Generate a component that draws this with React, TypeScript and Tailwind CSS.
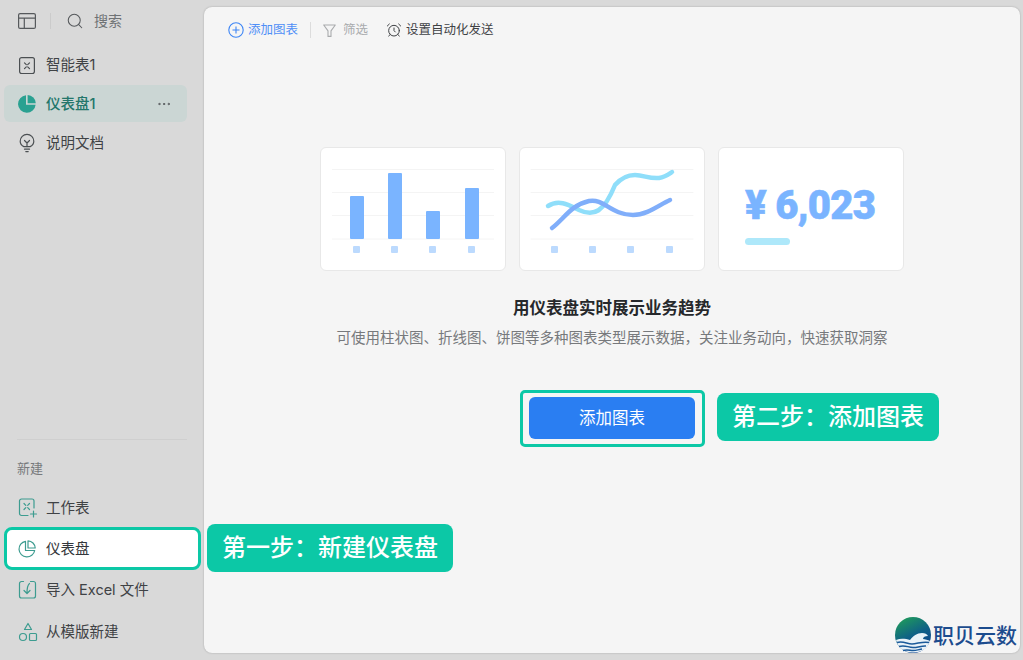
import { FC, ReactNode } from "react";
import { AlarmClock, Ellipsis, Search } from "lucide-react";

const cjk = "font-['Inter','Noto_Sans_CJK_SC',sans-serif]";

const SheetIcon = () => (
    <svg width="18" height="18" viewBox="0 0 18 18" fill="none" stroke="#4b4f52" strokeWidth="1.2">
        <rect x="1.6" y="1.6" width="14.8" height="16" rx="2" />
        <path d="M6.5 6.8l1.8 1.8M11.5 6.8l-1.8 1.8M6.5 12.6l1.8-1.8M11.5 12.6l-1.8-1.8" strokeLinecap="round" />
    </svg>
);

const PieFilled = () => (
    <svg width="18" height="18" viewBox="0 0 18 18" fill="#2aa191">
        <path d="M8 .2v9.5h9.6A8.8 8.8 0 1 1 8 .2z" />
        <path d="M9.6 0a8.4 8.4 0 0 1 8.2 8.2H9.6z" />
    </svg>
);

const BulbIcon = () => (
    <svg width="18" height="20" viewBox="0 0 18 20" fill="none" stroke="#4b4f52" strokeWidth="1.2" strokeLinecap="round" strokeLinejoin="round">
        <path d="M5.8 13.6C3.6 12.4 2.2 10.500 2.200 8.200a6.800 6.800 0 0 1 13.600 0c0 2.300-1.400 4.200-3.600 5.400z" />
        <path d="M6.500 7.500L9 10l2.500-2.500M9 10v3.600M6.500 16.200h5M7.800 18.600h2.400" />
    </svg>
);

const SheetPlusIcon = () => (
    <svg width="20" height="20" viewBox="0 0 20 20" fill="none" stroke="#3d9c90" strokeWidth="1.2" strokeLinecap="round">
        <path d="M10 17.500H3.500a2 2 0 0 1-2-2V3a2 2 0 0 1 2-2h10.500a2 2 0 0 1 2 2v7" />
        <path d="M6 5.500l1.800 1.800M11.500 5.500L9.700 7.300M6 11.500l1.800-1.800M11.500 11.500L9.700 9.700M15.500 13v6M12.500 16h6" />
    </svg>
);

const PieOutline = () => (
    <svg width="18" height="18" viewBox="0 0 18 18" fill="none" stroke="#3d9c90" strokeWidth="1.200">
        <path d="M7.500 1.300a7.900 7.900 0 1 0 9.200 9.200H7.500z" strokeLinejoin="round" />
        <path d="M10 .8a7.500 7.500 0 0 1 7.200 7.200H10z" strokeLinejoin="round" />
    </svg>
);

const ImportIcon = () => (
    <svg width="20" height="20" viewBox="0 0 20 20" fill="none" stroke="#3d9c90" strokeWidth="1.200" strokeLinecap="round" strokeLinejoin="round">
        <path d="M5.500 1.500h-2a2 2 0 0 0-2 2v12.500a2 2 0 0 0 2 2h12a2 2 0 0 0 2-2V3.500a2 2 0 0 0-2-2h-3" />
        <path d="M11.500 3.500C9.500 5 9 7.500 9 13.500M6 10.500l3 3 3-3" />
    </svg>
);

const TemplateIcon = () => (
    <svg width="20" height="20" viewBox="0 0 20 20" fill="none" stroke="#3d9c90" strokeWidth="1.200" strokeLinejoin="round">
        <path d="M10 1.500l3.500 6h-7z" />
        <circle cx="5" cy="15" r="3.500" />
        <rect x="11.500" y="11.500" width="7" height="7" rx="1" />
    </svg>
);

const LayoutIcon = () => (
    <svg width="18" height="16" viewBox="0 0 18 16" fill="none" stroke="#56595c" strokeWidth="1.200">
        <rect x="0.600" y="0.600" width="16.800" height="14.800" rx="1.500" />
        <path d="M0.600 5.200h16.800M6.300 5.200v10.200" />
    </svg>
);

interface RowProps {
    icon: ReactNode
    label: string
    className?: string
    children?: ReactNode
}

const Row: FC<RowProps> = ({ icon, label, className, children }) => (
    <div className={`flex items-center h-[37px] mx-1 w-[183px] pl-[14px] pr-[15px] rounded-md text-[14.500px] text-[#3f4245] ${className ?? ""}`}>
        <span className="w-[28px] flex items-center shrink-0">{icon}</span>
        <span className="flex-1">{label}</span>
        {children}
    </div>
);

const Chart: FC<{ children: ReactNode }> = ({ children }) => (
    <div className="w-[186px] h-[124px] bg-white rounded-md border border-[#e8e8e8] shrink-0">
        {children}
    </div>
);

const Grid = () => (
    <g stroke="#f4f4f4" strokeWidth="1">
        <path d="M11 21.500h162M11 44.500h162M11 67.500h162M11 91h162" />
    </g>
);

const Dots: FC<{ xs: number[] }> = ({ xs }) => (
    <g fill="#bcdafe">
        {xs.map((x) => (
            <rect key={x} x={x} y="98" width="7" height="7" rx="1" />
        ))}
    </g>
);

const BarCard = () => (
    <Chart>
        <svg width="184" height="122" viewBox="0 0 184 122">
            <Grid />
            <g fill="#7ab4ff">
                <rect x="29" y="48" width="14" height="43" rx="1" />
                <rect x="67" y="25" width="14" height="66" rx="1" />
                <rect x="105" y="63" width="14" height="28" rx="1" />
                <rect x="144" y="40" width="14" height="51" rx="1" />
            </g>
            <Dots xs={[32, 70, 108, 147]} />
        </svg>
    </Chart>
);

const LineCard = () => (
    <Chart>
        <svg width="184" height="122" viewBox="0 0 184 122" fill="none" strokeLinecap="round" strokeWidth="4.500">
            <Grid />
            <path d="M28 58C39 51 49 57 59 62C74 69 84 64 95 37C102 29 109 27 115 27C124 27 129 31 139 30C145 29 149 26 152 24" stroke="#8fdefa" />
            <path d="M32 80C44 71 51 57 69 53C84 50 91 67 113 67C127 67 139 57 150 52" stroke="#80aefa" />
            <Dots xs={[31, 69, 107, 146]} />
        </svg>
    </Chart>
);

const AmountCard = () => (
    <Chart>
        <div className="pl-[26px] pt-[36px]">
            <div className="font-['Roboto',sans-serif] font-black text-[40px] tracking-[-0.7px] leading-[44px] text-[#7ab4ff] [-webkit-text-stroke:0.6px_#7ab4ff] whitespace-nowrap">¥ 6,023</div>
            <div className="w-[45px] h-[7px] mt-[10px] rounded-full bg-[#aee8fa]" />
        </div>
    </Chart>
);

const ZhibeiLogo = () => (
    <div className="absolute left-[895px] top-[617px] flex items-center">
        <svg width="36" height="36" viewBox="0 0 36 36" className="mr-[2px]">
            <defs>
                <linearGradient id="ball" x1="0.250" y1="0" x2="0.750" y2="1">
                    <stop offset="0" stopColor="#1f9a5c" />
                    <stop offset="0.500" stopColor="#0f6186" />
                    <stop offset="1" stopColor="#123f8e" />
                </linearGradient>
            </defs>
            <circle cx="18" cy="18" r="18" fill="url(#ball)" />
            <path d="M1 23C6 21 11 22 15 23C18 19 22 16 27 16C30 16 32 17 33 19C30 19 28 20 28 22C30 22 33 23 35 24C33 31 27 35.500 18 35.500C9 35.500 3 31 1 23z" fill="#e9f2f8" />
            <path d="M2 25.500c6-2 10 1.500 15 1.500s11-3 17-1.500M4 29.500c6-2 9 1 14 1s9-2 13-1.500M8 33.500c4-1.500 7 0 10 0s6-1 9-1.500" stroke="#1b5a9a" strokeWidth="1.500" fill="none" />
        </svg>
        <span className="text-[21px] font-medium leading-none text-[#1c4c8e] whitespace-nowrap">职贝云数</span>
    </div>
);

const App = () => {
    return (
        <div className={`${cjk} relative flex w-[1023px] h-[660px] overflow-hidden bg-[#d9d9d9]`}>
            <aside className="w-[204px] shrink-0 flex flex-col">
                <div className="flex items-center h-[41px] pl-[18px] text-[#6f7275]">
                    <LayoutIcon />
                    <span className="w-px h-[16px] bg-[#cbcbcb] ml-[14px] mr-[15px]" />
                    <Search size={18} strokeWidth={1.400} className="text-[#56595c] mr-[10px]" />
                    <span className="text-[14px]">搜索</span>
                </div>
                <div className="flex flex-col gap-[2px] mt-[5px]">
                    <Row icon={<SheetIcon />} label="智能表1" />
                    <Row icon={<PieFilled />} label="仪表盘1" className="bg-[#cbd6d4] !text-[#23766b] font-medium">
                        <Ellipsis size={16} strokeWidth={1.500} className="text-[#55585b]" />
                    </Row>
                    <Row icon={<BulbIcon />} label="说明文档" />
                </div>
                <div className="mt-auto mb-[10px]">
                    <div className="h-px bg-[#cfcfcf] ml-[17px] mr-[17px]" />
                    <div className="text-[13px] text-[#77797c] pl-[17px] mt-[19px] mb-[12px] leading-[18px]">新建</div>
                    <div className="flex flex-col gap-[4.300px]">
                        <Row icon={<SheetPlusIcon />} label="工作表" />
                        <Row
                            icon={<PieOutline />}
                            label="仪表盘"
                            className="!w-[197px] !h-[43px] -my-[3px] !pl-[11px] bg-white border-[3px] border-[#0cc8a6] !rounded-lg !text-[#33363a]"
                        />
                        <Row icon={<ImportIcon />} label="导入 Excel 文件" />
                        <Row icon={<TemplateIcon />} label="从模版新建" />
                    </div>
                </div>
            </aside>

            <main className="w-[816px] h-[646px] mt-[7px] bg-[#f5f5f5] rounded-lg shadow-[0_0_2px_rgba(0,0,0,0.25)] flex flex-col">
                <div className="flex items-center h-[45px] pl-[24px] pt-px text-[12.500px]">
                    <span className="flex items-center gap-[4px] text-[#4f8ff7]">
                        <svg width="16" height="16" viewBox="0 0 16 16" fill="none" stroke="#3d85f5" strokeWidth="1.100">
                            <circle cx="8" cy="8" r="7.200" />
                            <path d="M8 4.500v7M4.500 8h7" />
                        </svg>
                        添加图表
                    </span>
                    <span className="w-px h-[16px] bg-[#dcdcdc] mx-[12px]" />
                    <span className="flex items-center gap-[7px] text-[#a9abad]">
                        <svg width="13" height="13" viewBox="0 0 13 13" fill="none" stroke="#a9abad" strokeWidth="1.100" strokeLinejoin="round">
                            <path d="M.7 1h11.600L8 6.800v5.600H5V6.800z" />
                        </svg>
                        筛选
                    </span>
                    <span className="flex items-center gap-[4px] text-[#3f4245] ml-[18px]">
                        <AlarmClock size={16} strokeWidth={1.500} className="text-[#3f4245]" />
                        设置自动化发送
                    </span>
                </div>

                <div className="flex justify-center gap-[13px] mt-[95px]">
                    <BarCard />
                    <LineCard />
                    <AmountCard />
                </div>

                <div className="text-center text-[16.500px] font-semibold leading-[24px] text-[#26282b] mt-[25px]">用仪表盘实时展示业务趋势</div>
                <div className="text-center text-[14.500px] leading-[22px] text-[#77797c] mt-[7px]">可使用柱状图、折线图、饼图等多种图表类型展示数据，关注业务动向，快速获取洞察</div>

                <button className="self-center w-[166px] h-[42px] mt-[48px] rounded-md bg-[#2a7ef2] text-white text-[16.500px]">添加图表</button>
            </main>

            <div className="absolute left-[520px] top-[390px] w-[185px] h-[57px] rounded-[5px] border-[3px] border-[#0cc8a6]" />
            <div className="absolute left-[717px] top-[393px] w-[222px] h-[48px] rounded-lg bg-[#0cc8a6] text-white text-[24px] font-medium leading-[48px] text-center whitespace-nowrap">第二步：添加图表</div>

            <div className="absolute left-[207px] top-[524px] w-[246px] h-[48px] rounded-lg bg-[#0cc8a6] text-white text-[24px] font-medium leading-[48px] text-center whitespace-nowrap">第一步：新建仪表盘</div>

            <ZhibeiLogo />
        </div>
    )
}

export default App
